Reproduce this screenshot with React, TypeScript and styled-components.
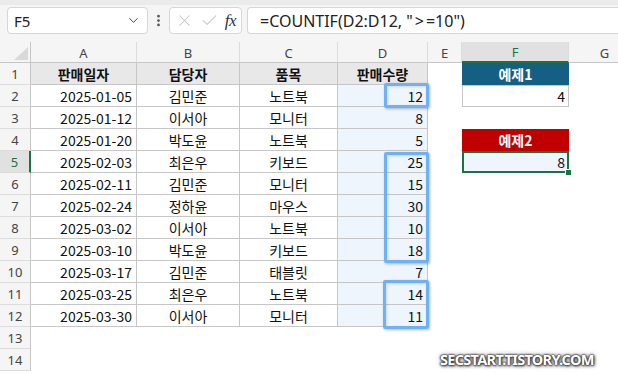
import React from 'react';
import styled, { createGlobalStyle } from 'styled-components';
import { ChevronDown, EllipsisVertical, X, Check } from 'lucide-react';

const GlobalStyle = createGlobalStyle`
  html, body { margin: 0; padding: 0; background: #fff; }
  body { font-family: "Noto Sans", "Noto Sans CJK KR", sans-serif; overflow: hidden; }
  #root { width: 618px; height: 374px; overflow: hidden; }
`;

const COLS = [31, 106, 103, 98, 90, 34, 107, 72];
const HEADER_H = 21;
const ROW_H = 22;
const ROW_COUNT = 14;
const LETTERS = ['A', 'B', 'C', 'D', 'E', 'F', 'G'];
const SELECTED_COL = 5;
const SELECTED_ROW = 5;

const GRID = '#c6c6c6';
const GREEN = '#1e7145';

const Page = styled.div`
  width: 618px;
  height: 374px;
  overflow: hidden;
  position: relative;
  background: #fff;
`;

const Toolbar = styled.div`
  height: 42px;
  box-sizing: border-box;
  background: #f5f5f5;
  border-top: 5px solid #ebebeb;
  display: flex;
  align-items: flex-start;
  padding: 2px 0 0 7px;
`;

const NameBox = styled.div`
  width: 141px;
  height: 27px;
  box-sizing: border-box;
  background: #fff;
  border: 1px solid #d6d6d6;
  border-radius: 4px;
  display: flex;
  align-items: center;
  justify-content: space-between;
  padding: 0 6px 0 6px;
  font-size: 15px;
  color: #222;
`;

const DotsSlot = styled.div`
  width: 21px;
  height: 27px;
  display: flex;
  align-items: center;
  justify-content: center;
  color: #555;
`;

const FxBox = styled.div`
  width: 73px;
  height: 27px;
  box-sizing: border-box;
  background: #fff;
  border: 1px solid #d6d6d6;
  border-radius: 4px;
  display: flex;
  align-items: center;
  justify-content: space-between;
  padding: 0 5px 0 5px;
  color: #c4c4c4;
`;

const Fx = styled.span`
  font-family: "Liberation Serif", serif;
  font-style: italic;
  font-size: 17px;
  color: #333;
  letter-spacing: -0.5px;
  line-height: 1;
`;

const FormulaBox = styled.div`
  margin-left: 5px;
  flex: 1;
  height: 27px;
  box-sizing: border-box;
  background: #fff;
  border: 1px solid #d6d6d6;
  border-right: none;
  border-radius: 4px 0 0 4px;
  display: flex;
  align-items: center;
  padding-left: 12px;
  font-size: 16px;
  color: #222;
`;

const Op = styled.span`
  padding: 0 2px;
`;

const Sheet = styled.div`
  position: relative;
  display: grid;
  grid-template-columns: ${COLS.map((c) => c + 'px').join(' ')};
  grid-template-rows: ${HEADER_H}px repeat(${ROW_COUNT}, ${ROW_H}px);
  width: ${COLS.reduce((a, b) => a + b, 0)}px;
`;

const Corner = styled.div`
  position: relative;
  background: #f5f5f5;
  border-right: 1px solid ${GRID};
  border-bottom: 1px solid ${GRID};
  box-sizing: border-box;
  &::after {
    content: '';
    position: absolute;
    right: 2px;
    bottom: 2px;
    width: 0;
    height: 0;
    border-left: 14px solid transparent;
    border-bottom: 13px solid #d9d9d9;
  }
`;

const ColHead = styled.div<{ $sel?: boolean }>`
  box-sizing: border-box;
  background: ${(p) => (p.$sel ? '#e1e1e1' : '#f5f5f5')};
  border-right: 1px solid #dcdcdc;
  border-bottom: ${(p) => (p.$sel ? `2px solid ${GREEN}` : `1px solid ${GRID}`)};
  display: flex;
  align-items: center;
  justify-content: center;
  font-size: 13px;
  color: ${(p) => (p.$sel ? GREEN : '#444')};
  padding-top: 1px;
`;

const RowHead = styled.div<{ $sel?: boolean }>`
  box-sizing: border-box;
  background: ${(p) => (p.$sel ? '#e1e1e1' : '#f5f5f5')};
  border-right: ${(p) => (p.$sel ? `2px solid ${GREEN}` : `1px solid ${GRID}`)};
  border-bottom: 1px solid #dcdcdc;
  display: flex;
  align-items: center;
  justify-content: center;
  font-size: 13px;
  color: ${(p) => (p.$sel ? GREEN : '#444')};
`;

const Cell = styled.div<{
  $align?: 'left' | 'center' | 'right';
  $bg?: string;
  $bold?: boolean;
  $color?: string;
  $table?: boolean;
  $boxed?: boolean;
  $selected?: boolean;
}>`
  position: relative;
  box-sizing: border-box;
  display: flex;
  align-items: center;
  justify-content: ${(p) =>
    p.$align === 'right' ? 'flex-end' : p.$align === 'center' ? 'center' : 'flex-start'};
  padding: 0 4px;
  font-family: "Noto Sans CJK KR", "Noto Sans", sans-serif;
  font-size: 14px;
  color: ${(p) => p.$color || '#111'};
  font-weight: ${(p) => (p.$bold ? 700 : 400)};
  background: ${(p) => p.$bg || 'transparent'};
  border-right: ${(p) => (p.$table ? `1px solid ${GRID}` : 'none')};
  border-bottom: ${(p) => (p.$table ? `1px solid ${GRID}` : 'none')};
  box-shadow: ${(p) =>
    p.$selected
      ? `inset 0 0 0 2px ${GREEN}`
      : p.$boxed
      ? `inset 0 0 0 1px ${GRID}`
      : 'none'};
  white-space: nowrap;
`;

const FillHandle = styled.div`
  position: absolute;
  right: -3px;
  bottom: -3px;
  width: 5px;
  height: 5px;
  background: ${GREEN};
  border: 1px solid #fff;
  z-index: 3;
`;

const Highlight = styled.div`
  position: absolute;
  box-sizing: border-box;
  border: 3px solid #6fb1f5;
  border-radius: 2px;
  box-shadow: 1px 1px 3px rgba(0, 0, 0, 0.28), inset 1px 1px 3px rgba(0, 0, 0, 0.12);
  pointer-events: none;
  z-index: 2;
`;

const Watermark = styled.div`
  position: absolute;
  left: 440px;
  top: 349px;
  font-family: "Noto Sans", sans-serif;
  font-weight: 700;
  font-size: 14.5px;
  letter-spacing: -0.7px;
  color: #fff;
  text-shadow: 0 0 1px #333, 0 0 2px #333, 0 0 2px #444, 1px 1px 3px #333, 0 0 5px #777;
  z-index: 4;
`;

type Row = [string, string, string, number];

const DATA: Row[] = [
  ['2025-01-05', '김민준', '노트북', 12],
  ['2025-01-12', '이서아', '모니터', 8],
  ['2025-01-20', '박도윤', '노트북', 5],
  ['2025-02-03', '최은우', '키보드', 25],
  ['2025-02-11', '김민준', '모니터', 15],
  ['2025-02-24', '정하윤', '마우스', 30],
  ['2025-03-02', '이서아', '노트북', 10],
  ['2025-03-10', '박도윤', '키보드', 18],
  ['2025-03-17', '김민준', '태블릿', 7],
  ['2025-03-25', '최은우', '노트북', 14],
  ['2025-03-30', '이서아', '모니터', 11],
];

const HEADERS = ['판매일자', '담당자', '품목', '판매수량'];

// drawn highlight shapes (page coordinates of their outer edges)
const HIGHLIGHTS = [
  { left: 384, top: 83, width: 45, height: 25 },
  { left: 384, top: 152, width: 45, height: 111 },
  { left: 383, top: 280, width: 46, height: 49 },
];

const D_FILL = '#eef5fd';
const HEAD_FILL = '#e8e8e8';

function SideCell({ row }: { row: number }) {
  if (row === 1)
    return (
      <Cell $align="center" $bg="#156082" $color="#fff" $bold>
        예제1
      </Cell>
    );
  if (row === 2)
    return (
      <Cell $align="right" $boxed $bg="#fff">
        4
      </Cell>
    );
  if (row === 4)
    return (
      <Cell $align="center" $bg="#c00000" $color="#fff" $bold>
        예제2
      </Cell>
    );
  if (row === 5)
    return (
      <Cell $align="right" $selected $bg={D_FILL}>
        8
        <FillHandle />
      </Cell>
    );
  return <Cell />;
}

function SheetRow({ row }: { row: number }) {
  const cells: React.ReactNode[] = [];
  cells.push(
    <RowHead key="h" $sel={row === SELECTED_ROW}>
      {row}
    </RowHead>
  );
  if (row === 1) {
    HEADERS.forEach((h, i) =>
      cells.push(
        <Cell key={i} $align="center" $bg={HEAD_FILL} $bold $table>
          {h}
        </Cell>
      )
    );
  } else if (row <= 12) {
    const d = DATA[row - 2];
    cells.push(
      <Cell key="a" $align="right" $table>
        {d[0]}
      </Cell>,
      <Cell key="b" $align="center" $table>
        {d[1]}
      </Cell>,
      <Cell key="c" $align="center" $table>
        {d[2]}
      </Cell>,
      <Cell key="d" $align="right" $table $bg={D_FILL}>
        {d[3]}
      </Cell>
    );
  } else {
    for (let i = 0; i < 4; i++) cells.push(<Cell key={i} />);
  }
  cells.push(<Cell key="e" />);
  cells.push(<SideCell key="f" row={row} />);
  cells.push(<Cell key="g" />);
  return <>{cells}</>;
}

export default function App() {
  return (
    <Page>
      <GlobalStyle />
      <Toolbar>
        <NameBox>
          <span>F5</span>
          <ChevronDown size={15} color="#444" strokeWidth={1.6} />
        </NameBox>
        <DotsSlot>
          <EllipsisVertical size={15} strokeWidth={2.4} />
        </DotsSlot>
        <FxBox>
          <X size={19} strokeWidth={1.3} />
          <Check size={19} strokeWidth={1.3} />
          <Fx>fx</Fx>
        </FxBox>
        <FormulaBox>
          =COUNTIF(D2:D12, "<Op>&gt;</Op>=10")
        </FormulaBox>
      </Toolbar>
      <Sheet>
        <Corner />
        {LETTERS.map((l, i) => (
          <ColHead key={l} $sel={i === SELECTED_COL}>
            {l}
          </ColHead>
        ))}
        {Array.from({ length: ROW_COUNT }, (_, i) => (
          <SheetRow key={i} row={i + 1} />
        ))}
        {HIGHLIGHTS.map((h, i) => (
          <Highlight
            key={i}
            style={{ left: h.left, top: h.top - 42, width: h.width, height: h.height }}
          />
        ))}
      </Sheet>
      <Watermark>SECSTART.TISTORY.COM</Watermark>
    </Page>
  );
}
